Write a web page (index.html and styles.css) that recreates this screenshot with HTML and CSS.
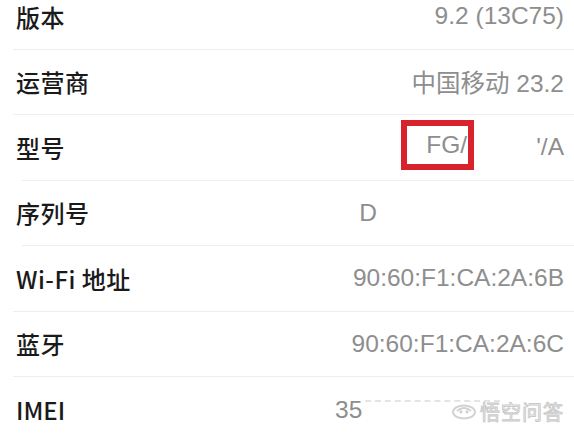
FILE: index.html
```html
<!DOCTYPE html>
<html lang="zh-CN">
<head>
	<meta charset="UTF-8">
<link rel="stylesheet" href="styles.css">
</head>
<body>
<ul class="about">
	<li class="row"><span class="label">版本</span><span class="value">9.2 (13C75)</span></li>
	<li class="row"><span class="label">运营商</span><span class="value">中国移动 23.2</span></li>
	<li class="row row-indent">
		<span class="label">型号</span>
		<span class="value">
			<span class="mark"><span class="mark-text">FG/</span></span>
			<span class="tail">'/A</span>
		</span>
	</li>
	<li class="row row-indent"><span class="label">序列号</span><span class="value value-serial">D</span></li>
	<li class="row"><span class="label">Wi-Fi 地址</span><span class="value">90:60:F1:CA:2A:6B</span></li>
	<li class="row"><span class="label">蓝牙</span><span class="value">90:60:F1:CA:2A:6C</span></li>
	<li class="row row-last">
		<span class="label label-latin">IMEI</span>
		<span class="value value-imei">
			<span>35</span>
			<span class="dashes"></span>
			<span class="wm">
				<svg class="wm-icon" width="26" height="18" viewBox="0 0 26 18">
					<ellipse cx="13" cy="10" rx="11" ry="6.5" fill="none" stroke="#d2d2d2" stroke-width="2"/>
					<path d="M6 9 Q13 3 20 9" fill="none" stroke="#d2d2d2" stroke-width="2"/>
					<circle cx="10" cy="10" r="1.6" fill="#d2d2d2"/>
					<circle cx="16" cy="10" r="1.6" fill="#d2d2d2"/>
				</svg>
				<span class="wm-text">悟空问答</span>
			</span>
		</span>
	</li>
</ul>
</body>
</html>
```

FILE: styles.css
```css
*{ margin:0; padding:0; list-style:none; box-sizing:border-box;}
body{ background:#fff; overflow:hidden; font-family:"Noto Sans CJK SC","Liberation Sans",sans-serif;}

.about{ margin-top:-16px;}
.row{ display:flex; align-items:center; justify-content:space-between; height:65.5px; margin-left:13px; padding:0 10px 0 3px; border-bottom:1px solid #eeeeee;}
/* these two rows have a shorter separator line */
.row-indent{ margin-left:22px; padding-left:0;}
.row-indent .label{ margin-left:-6px;}
.row-last{ border-bottom:none;}

.label{ font-size:24px; color:#1a1a1a; font-weight:500; letter-spacing:0.5px;}
.label-latin{ letter-spacing:0;}
.value{ display:flex; align-items:center; font-family:"Liberation Sans","Noto Sans CJK SC",sans-serif; font-size:24.5px; color:#8e8e8e; font-weight:400;}

/* model number: red frame, the rest is blanked out */
.mark{ display:flex; justify-content:flex-end; align-items:center; width:73px; height:50px; border:6px solid #d8232c; margin-top:-4px; padding-right:1px;}
.mark-text{ white-space:nowrap;}
.tail{ margin-left:62px;}

.value-serial{ margin-right:187px;}

.value-imei{ width:229px; justify-content:flex-start; position:relative;}
.dashes{ display:block; width:135px; height:0; border-top:2px dashed #e4e4e4; margin:-18px 0 0 3px;}
.wm{ position:absolute; right:0; top:50%; transform:translateY(-45%); display:flex; align-items:center; gap:3px;}
.wm-icon{ display:block;}
.wm-text{ font-family:"Noto Sans CJK SC",sans-serif; font-size:20px; color:#fff; -webkit-text-stroke:1px #cacaca; letter-spacing:1px;}
```
